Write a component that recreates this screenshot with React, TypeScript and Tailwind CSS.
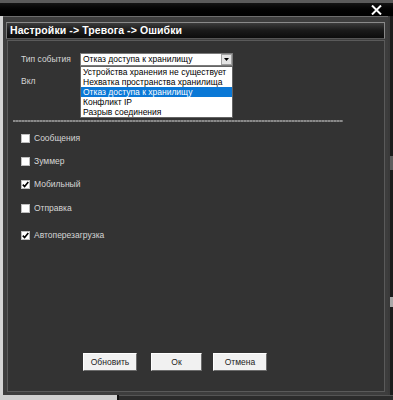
import React from 'react';

// Диалог настроек тревоги: ошибки хранилища

const eventTypes = [
  'Устройства хранения не существует',
  'Нехватка пространства хранилища',
  'Отказ доступа к хранилищу',
  'Конфликт IP',
  'Разрыв соединения',
];

const options = [
  { label: 'Сообщения', checked: false, mt: 'mt-[10px]' },
  { label: 'Зуммер', checked: false, mt: 'mt-[10px]' },
  { label: 'Мобильный', checked: true, mt: 'mt-[10px]' },
  { label: 'Отправка', checked: false, mt: 'mt-[11px]' },
  { label: 'Автоперезагрузка', checked: true, mt: 'mt-[14px]' },
];

const Checkbox: React.FC<{ checked: boolean }> = ({ checked }) => (
  <div className="w-[9px] h-[9px] bg-white border border-[#bdbdbd] flex items-center justify-center">
    {checked && (
      <svg width="7" height="7" viewBox="0 0 7 7">
        <path d="M0.8 3.6 L2.6 5.6 L6.3 1" stroke="#000" strokeWidth="1.6" fill="none" />
      </svg>
    )}
  </div>
);

const Button: React.FC<{ label: string; width: string }> = ({ label, width }) => (
  <button
    type="button"
    className={`${width} h-[18px] bg-[#f1f1f1] border border-t-white border-l-white border-b-[#6b6b6b] border-r-[#6b6b6b] text-[8.5px] text-[#222] flex items-center justify-center`}
  >
    {label}
  </button>
);

export default function App() {
  return (
    <div className="w-[393px] h-[400px] overflow-hidden bg-[#1e1e1e] flex flex-col font-['Liberation_Sans',Arial,sans-serif]">
      {/* верхняя полоса */}
      <div className="h-[3px] bg-[#5a5a5a]" />
      <div className="h-[13px] bg-gradient-to-b from-[#141414] to-black flex justify-end items-center pr-[11px]">
        <svg width="11" height="10" viewBox="0 0 11 10">
          <path d="M1 0.5 L10 9.5 M10 0.5 L1 9.5" stroke="#fff" strokeWidth="2" />
        </svg>
      </div>

      <div className="flex-1 flex min-h-0">
        <div className="w-[3px] bg-[#d4d4d4]" />

        {/* рамка окна */}
        <div className="flex-1 flex flex-col bg-[#3d3d3d] border-t border-[#6c6c6c] px-[3px] pt-[5px] pb-[3px]">
          {/* заголовок */}
          <div className="h-[17px] shrink-0 bg-gradient-to-b from-[#3c3c3c] via-[#1a1a1a] to-[#0c0c0c] border border-t-[#8a8a8a] border-l-[#7a7a7a] border-r-[#888] border-b-[#555] flex items-center pl-[3px]">
            <span className="text-white font-bold text-[10.5px] leading-none tracking-[0.1px]">
              Настройки -&gt; Тревога -&gt; Ошибки
            </span>
          </div>

          {/* панель */}
          <div className="flex-1 mt-[1px] ml-[1px] bg-[#333333] border border-[#5a5a5a] flex flex-col px-[4px] pt-[12px]">
            <div className="flex items-center h-[13px] pl-[9px]">
              <span className="w-[59px] text-[8.5px] text-[#d6d6d6]">Тип события</span>
              <div className="relative w-[153px] h-[13px] bg-white border border-[#7a7a7a] flex items-center">
                <span className="flex-1 pl-[2px] text-[8.5px] text-black leading-none whitespace-nowrap">
                  Отказ доступа к хранилищу
                </span>
                <div className="w-[11px] h-[11px] bg-[#e4e4e4] border border-[#a0a0a0] flex items-center justify-center">
                  <svg width="5" height="3" viewBox="0 0 5 3">
                    <path d="M0 0 H5 L2.5 3 Z" fill="#000" />
                  </svg>
                </div>

                {/* выпадающий список */}
                <div className="absolute left-[-1px] top-[12px] w-[153px] bg-white border border-[#646464] z-10">
                  {eventTypes.map((t, i) => (
                    <div
                      key={t}
                      className={`h-[10px] pl-[2px] text-[8.5px] leading-[10px] whitespace-nowrap ${
                        i === 2 ? 'bg-[#0a78d6] text-white' : 'text-black'
                      }`}
                    >
                      {t}
                    </div>
                  ))}
                </div>
              </div>
            </div>

            <div className="flex items-center h-[13px] mt-[9px] pl-[9px]">
              <span className="text-[8.5px] text-[#d6d6d6]">Вкл</span>
            </div>

            <div className="mt-[32px] ml-[1px] w-[330px] h-[2px] bg-[repeating-linear-gradient(90deg,#8a8a8a_0px,#8a8a8a_2px,#6e6e6e_2px,#6e6e6e_3px)]" />

            {options.map((o) => (
              <div key={o.label} className={`flex items-center h-[13px] pl-[9px] ${o.mt}`}>
                <Checkbox checked={o.checked} />
                <span className="ml-[4px] text-[8.5px] text-[#d6d6d6]">{o.label}</span>
              </div>
            ))}

            <div className="mt-auto mb-[20px] flex pl-[71px]">
              <Button label="Обновить" width="w-[54px]" />
              <div className="w-[14px]" />
              <Button label="Ок" width="w-[51px]" />
              <div className="w-[11px]" />
              <Button label="Отмена" width="w-[54px]" />
            </div>
          </div>
        </div>

        {/* правая кромка */}
        <div className="w-[5px] flex">
          <div className="w-[2px] bg-[#3a3a3a]" />
          <div className="flex-1 bg-[#1c1c1c] flex flex-col">
            <div className="h-[140px]" />
            <div className="h-[14px] bg-[#5e5e5e]" />
            <div className="h-[127px]" />
            <div className="h-[10px] bg-[#a8a8a8]" />
          </div>
        </div>
      </div>

      {/* нижняя полоса */}
      <div className="h-[5px] flex">
        <div className="w-[117px] bg-[#cfcfcf]" />
        <div className="w-[2px] bg-[#111]" />
        <div className="flex-1 bg-[#2c2c2c] border-t border-[#555]" />
      </div>
    </div>
  );
}
